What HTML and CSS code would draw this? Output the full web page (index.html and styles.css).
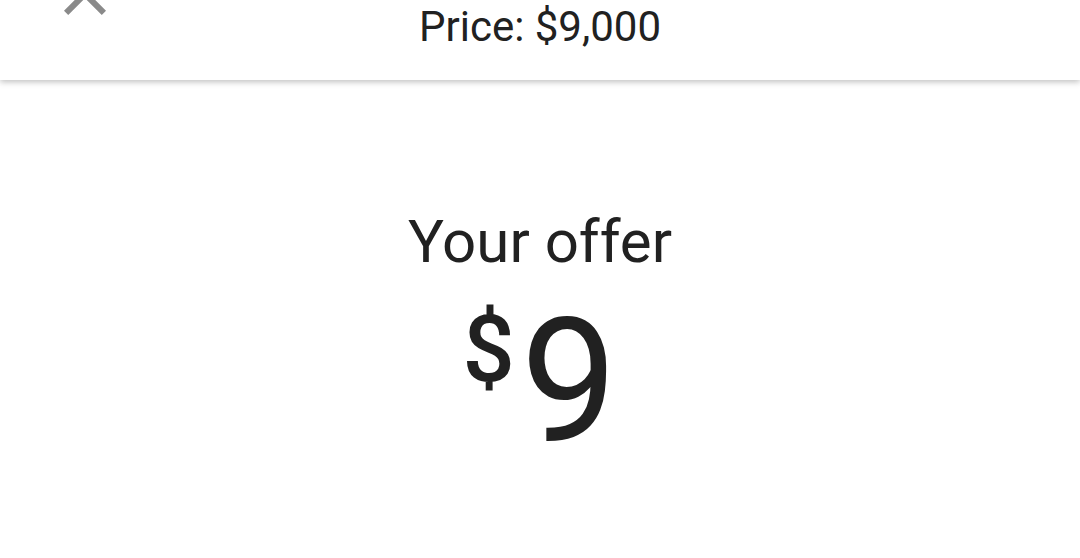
FILE: index.html
```html
<!DOCTYPE html>
<html lang="en">
<head>
    <meta charset="UTF-8">
    <meta name="viewport" content="width=device-width, initial-scale=1.0">
    <title>Make an offer</title>
    <link rel="stylesheet" href="styles.css">
</head>
<body>
    <header class="topbar">
        <svg class="close-icon" viewBox="0 0 24 24" aria-hidden="true">
            <path d="M19 6.41L17.59 5 12 10.59 6.41 5 5 6.41 10.59 12 5 17.59 6.41 19 12 13.41 17.59 19 19 17.59 13.41 12z"/>
        </svg>
        <div class="price">Price: $9,000</div>
    </header>

    <main class="offer">
        <h1 class="offer-label">Your offer</h1>
        <div class="offer-amount">
            <span class="currency">$</span>
            <span class="value">9</span>
        </div>
    </main>
</body>
</html>
```

FILE: styles.css
```css
body {
    font-family: Roboto, "Noto Sans", Arial, sans-serif;
    background-color: #fff;
    color: #212121;
    margin: 0;
    padding: 0;
    overflow: hidden;
}

.topbar {
    position: relative;
    height: 80px;
    display: flex;
    justify-content: center;
    align-items: flex-start;
    background-color: #fff;
    box-shadow: 0 2px 6px rgba(0, 0, 0, 0.25);
    z-index: 1;
}

.close-icon {
    position: absolute;
    left: 49px;
    top: -42px;
    width: 72px;
    height: 72px;
    fill: #8a8a8a;
}

.price {
    font-size: 42px;
    line-height: 54px;
}

.offer {
    display: flex;
    flex-direction: column;
    align-items: center;
    padding-top: 127px;
}

.offer-label {
    font-size: 60px;
    font-weight: 400;
    line-height: 70px;
    margin: 0;
}

.offer-amount {
    display: flex;
    align-items: flex-start;
    margin-top: 30px;
}

.currency {
    font-size: 92px;
    font-weight: 500;
    line-height: 86px;
    margin-right: 6px;
}

.value {
    font-size: 172px;
    line-height: 150px;
}
```
